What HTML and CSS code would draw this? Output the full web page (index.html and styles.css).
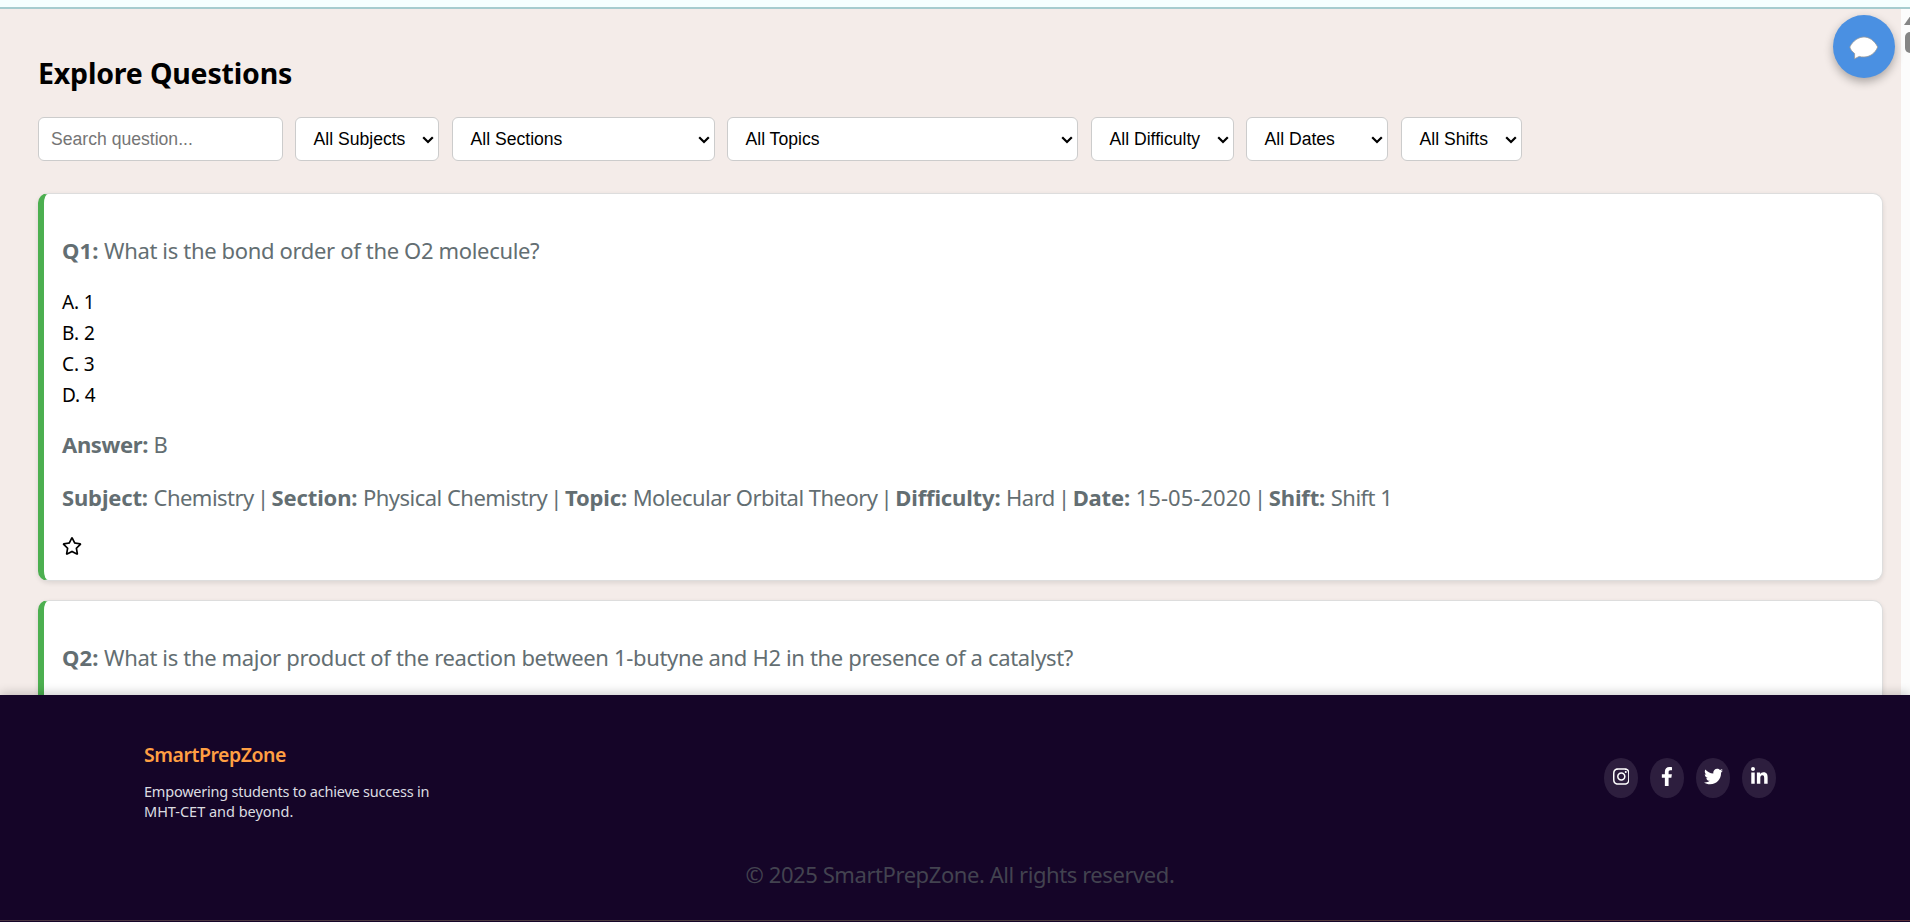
FILE: index.html
```html
<!DOCTYPE html>
<html lang="en">
<head>
<meta charset="utf-8">
<title>SmartPrepZone</title>
<link rel="stylesheet" href="styles.css">
</head>
<body>
<div class="app">
  <header class="topbar"></header>
  <div class="viewport">
    <main class="content">
      <h1 class="title"><span>Explore Questions</span></h1>
      <div class="filters">
        <input class="search" type="text" placeholder="Search question...">
        <div class="select subjects"><span>All Subjects</span><svg class="chev" viewBox="0 0 12 8"><path d="M1.2 1.2 6 6l4.800-4.800"/></svg></div>
        <div class="select sections"><span>All Sections</span><svg class="chev" viewBox="0 0 12 8"><path d="M1.2 1.2 6 6l4.800-4.800"/></svg></div>
        <div class="select topics"><span>All Topics</span><svg class="chev" viewBox="0 0 12 8"><path d="M1.2 1.2 6 6l4.800-4.800"/></svg></div>
        <div class="select difficulty"><span>All Difficulty</span><svg class="chev" viewBox="0 0 12 8"><path d="M1.2 1.2 6 6l4.800-4.800"/></svg></div>
        <div class="select dates"><span>All Dates</span><svg class="chev" viewBox="0 0 12 8"><path d="M1.2 1.2 6 6l4.800-4.800"/></svg></div>
        <div class="select shifts"><span>All Shifts</span><svg class="chev" viewBox="0 0 12 8"><path d="M1.2 1.2 6 6l4.800-4.800"/></svg></div>
      </div>
      <article class="card">
        <p class="line question"><strong>Q1:</strong> What is the bond order of the O2 molecule?</p>
        <ul class="options"><li>A. 1</li><li>B. 2</li><li>C. 3</li><li>D. 4</li></ul>
        <p class="line answer"><strong>Answer:</strong> B</p>
        <p class="line meta"><strong>Subject:</strong> Chemistry <i class="pipe">|</i> <strong>Section:</strong> Physical Chemistry <i class="pipe">|</i> <strong>Topic:</strong> Molecular Orbital Theory <i class="pipe">|</i> <strong>Difficulty:</strong> Hard <i class="pipe">|</i> <strong>Date:</strong> <span class="digits">15-05-2020</span> <i class="pipe">|</i> <strong>Shift:</strong> Shift 1</p>
        <svg class="star" viewBox="0 0 576 512"><path d="M528.1 171.500L382 150.200 316.700 17.800c-11.700-23.600-45.600-23.900-57.400 0L194 150.200 47.900 171.500c-26.200 3.800-36.700 36.100-17.700 54.600l105.700 103-25 145.500c-4.500 26.300 23.200 46 46.400 33.700L288 439.600l130.700 68.700c23.200 12.200 50.900-7.400 46.400-33.700l-25-145.500 105.700-103c19-18.500 8.500-50.800-17.700-54.600zM388.600 312.300l23.700 138.400L288 385.400l-124.300 65.300 23.700-138.400-100.600-98 139-20.200 62.200-126 62.200 126 139 20.200-100.600 98z"/></svg>
      </article>
      <article class="card">
        <p class="line question"><strong>Q2:</strong> What is the major product of the reaction between 1-butyne and H2 in the presence of a catalyst?</p>
      </article>
    </main>
    <div class="scrollbar"><div class="arrow"></div><div class="thumb"></div></div>
  </div>
  <footer class="footer">
    <div class="foot-row">
      <div>
        <h3 class="brand">SmartPrepZone</h3>
        <p class="tagline">Empowering students to achieve success in<br><span class="tail">MHT-CET and beyond.</span></p>
      </div>
      <div class="socials">
        <a class="social"><svg viewBox="0 0 448 512"><path d="M224.100 141c-63.600 0-114.900 51.300-114.900 114.900s51.300 114.900 114.900 114.900S339 319.500 339 255.900 287.700 141 224.100 141zm0 189.600c-41.100 0-74.700-33.500-74.700-74.700s33.500-74.700 74.700-74.700 74.700 33.500 74.700 74.700-33.600 74.700-74.700 74.700zm146.400-194.300c0 14.900-12 26.800-26.800 26.800-14.900 0-26.800-12-26.800-26.800s12-26.800 26.800-26.800 26.800 12 26.800 26.800zm76.100 27.200c-1.700-35.900-9.900-67.700-36.200-93.900-26.200-26.200-58-34.400-93.900-36.200-37-2.100-147.900-2.100-184.900 0-35.800 1.700-67.600 9.900-93.900 36.100s-34.400 58-36.200 93.900c-2.100 37-2.100 147.900 0 184.900 1.700 35.900 9.900 67.700 36.200 93.900s58 34.400 93.900 36.200c37 2.100 147.900 2.100 184.900 0 35.900-1.700 67.700-9.900 93.900-36.200 26.200-26.200 34.400-58 36.200-93.900 2.100-37 2.100-147.800 0-184.800zM398.800 388c-7.800 19.600-22.900 34.700-42.600 42.600-29.500 11.700-99.500 9-132.100 9s-102.700 2.600-132.100-9c-19.600-7.800-34.700-22.900-42.600-42.600-11.700-29.500-9-99.500-9-132.100s-2.600-102.700 9-132.100c7.800-19.600 22.900-34.700 42.600-42.600 29.500-11.700 99.500-9 132.100-9s102.700-2.600 132.100 9c19.600 7.800 34.700 22.900 42.600 42.600 11.700 29.500 9 99.500 9 132.100s2.700 102.700-9 132.100z"/></svg></a>
        <a class="social"><svg viewBox="0 0 320 512"><path d="M279.140 288l14.220-92.660h-88.910v-60.130c0-25.350 12.420-50.060 52.240-50.060h40.420V6.260S260.430 0 225.360 0c-73.220 0-121.080 44.380-121.080 124.720v70.620H22.890V288h81.390v224h100.170V288z"/></svg></a>
        <a class="social"><svg viewBox="0 0 512 512"><path d="M459.370 151.716c.325 4.548.325 9.097.325 13.645 0 138.720-105.583 298.558-298.558 298.558-59.452 0-114.680-17.219-161.137-47.106 8.447.974 16.568 1.299 25.340 1.299 49.055 0 94.213-16.568 130.274-44.832-46.132-.975-84.792-31.188-98.112-72.772 6.498.974 12.995 1.624 19.818 1.624 9.421 0 18.843-1.300 27.614-3.573-48.081-9.747-84.143-51.980-84.143-102.985v-1.299c13.969 7.797 30.214 12.670 47.431 13.319-28.264-18.843-46.781-51.005-46.781-87.391 0-19.492 5.197-37.360 14.294-52.954 51.655 63.675 129.300 105.258 216.365 109.807-1.624-7.797-2.599-15.918-2.599-24.040 0-57.828 46.782-104.934 104.934-104.934 30.213 0 57.502 12.670 76.670 33.137 23.715-4.548 46.456-13.320 66.599-25.340-7.798 24.366-24.366 44.833-46.132 57.827 21.117-2.273 41.584-8.122 60.426-16.243-14.292 20.791-32.161 39.308-52.628 54.253z"/></svg></a>
        <a class="social"><svg viewBox="0 0 448 512"><path d="M100.280 448H7.400V148.900h92.880zM53.790 108.100C24.090 108.100 0 83.500 0 53.800a53.790 53.790 0 0 1 107.580 0c0 29.700-24.100 54.300-53.790 54.300zM447.900 448h-92.680V302.400c0-34.700-.7-79.200-48.290-79.200-48.290 0-55.690 37.700-55.690 76.700V448h-92.780V148.900h89.080v40.800h1.300c12.400-23.500 42.690-48.300 87.880-48.300 94 0 111.280 61.900 111.280 142.300V448z"/></svg></a>
      </div>
    </div>
    <p class="copyright"><span>© 2025 SmartPrepZone. All rights reserved.</span></p>
    <div class="edge"></div>
  </footer>
  <button class="chat" aria-label="Chat"><svg viewBox="0 0 30 24"><path d="M15 1C20 1 25.500 4.500 28.700 11c-2.500 6.500-8.200 10-13.700 10-2 0-3.400-.2-4.800-.6L5.600 22.800V17.500C3 15.500 1.500 13.500 .8 11 4 4.500 9.800 1 15 1z"/></svg></button>
</div>
</body>
</html>
```
FILE: styles.css
```css
* { box-sizing: border-box; }
body {
  margin: 0;
  font-family: "Noto Sans", "Open Sans", sans-serif;
  background: #f4ece9;
}
h1, h3, p, ul { margin: 0; padding: 0; }
.app {
  position: relative;
  display: flex;
  flex-direction: column;
  height: 922px;
  overflow: hidden;
}
.topbar { flex: none; height: 9px; background: #f5ffff; border-bottom: 2px solid #a6cccf; }
.viewport { flex: 1; min-height: 0; display: flex; overflow: hidden; }
.content { flex: 1; min-width: 0; padding: 44px 18px 0 38px; }
.title { font-size: 28.5px; line-height: 40px; font-weight: 700; letter-spacing: -0.18px; color: #000; }
.filters {
  display: flex;
  margin-top: 24px;
  height: 44px;
  font-family: "Liberation Sans", Arial, sans-serif;
  font-size: 17.6px;
}
.search, .select {
  height: 44px;
  background: #fff;
  border: 1px solid #ccc;
  border-radius: 6px;
}
.search { width: 245px; padding: 0 12px; font: inherit; outline: 0; }
.search::placeholder { color: #757575; }
.select {
  display: flex;
  align-items: center;
  justify-content: space-between;
  padding: 0 4px 0 17.5px;
  color: #000;
  white-space: nowrap;
}
.chev { width: 12px; height: 8px; margin-top: 2px; fill: none; stroke: #000; stroke-width: 2.2; }
.subjects { width: 144px; margin-left: 12px; }
.sections { width: 263px; margin-left: 13px; }
.topics { width: 351px; margin-left: 12px; }
.difficulty { width: 143px; margin-left: 13px; }
.dates { width: 142px; margin-left: 12px; }
.shifts { width: 121px; margin-left: 13px; }
.card {
  margin-top: 32px;
  height: 388px;
  padding: 41px 18px 0;
  background: #fff;
  border: 1px solid #ddd;
  border-left: 6px solid #4caf50;
  border-radius: 10px;
  box-shadow: 0 2px 5px rgba(0, 0, 0, .1);
}
.card + .card { margin-top: 19px; }
.line { font-size: 22px; line-height: 30px; color: #636e72; white-space: nowrap; letter-spacing: -0.34px; }
.question strong { letter-spacing: 0.15px; }
.options { margin-top: 22px; list-style: none; font-size: 19px; line-height: 31px; color: #000; letter-spacing: -0.1px; }
.answer { margin-top: 18px; }
.meta { margin-top: 23px; letter-spacing: -0.52px; }
.meta strong { letter-spacing: -0.15px; margin-right: 0.4px; }
.digits { letter-spacing: 0.05px; }
.pipe { font-style: normal; margin: 0 -2.100px; }
.star { display: block; width: 20px; height: 18px; margin-top: 25px; }
.scrollbar { flex: none; width: 9px; background: #fcfcfc; overflow: hidden; }
.arrow { margin: 6px 0 0 3px; width: 14px; height: 10px; background: #858585; clip-path: polygon(50% 0, 100% 100%, 0 100%); }
.thumb { margin: 7px 0 0 4px; width: 12px; height: 21px; border-radius: 5px; background: #858585; }
.footer {
  position: relative;
  flex: none;
  display: flex;
  flex-direction: column;
  height: 227px;
  padding: 46px 134px 0 144px;
  background: #150528;
  box-shadow: 0 -2px 10px rgba(0, 0, 0, .2);
}
.foot-row { display: flex; justify-content: space-between; }
.brand { font-size: 19.500px; line-height: 28px; font-weight: 600; color: #ff9f43; letter-spacing: -0.46px; }
.tagline { margin-top: 12px; font-size: 14.500px; line-height: 20px; color: #dcdde1; letter-spacing: -0.22px; white-space: nowrap; }
.tail { letter-spacing: -0.02px; }
.socials { display: flex; gap: 12.500px; margin-top: 17px; }
.social {
  display: flex;
  justify-content: center;
  width: 33.600px;
  height: 40px;
  padding-top: 9px;
  border-radius: 50%;
  background: #2d1e3e;
}
.social svg { height: 19px; fill: #fff; }
.copyright { margin: 38px -7px 0 -7px; text-align: center; font-size: 22px; line-height: 30px; color: #434350; letter-spacing: -0.43px; }
.edge { margin: auto -134px 1px -144px; height: 1px; background: linear-gradient(90deg, #4a3442, #4a3d3d 50%, #5a2f38); }
.chat {
  position: absolute;
  left: 1833px;
  top: 15px;
  width: 62px;
  height: 63px;
  padding: 3px 0 0;
  display: flex;
  align-items: center;
  justify-content: center;
  border: 0;
  border-radius: 50%;
  background: #4a90e2;
  box-shadow: 0 4px 10px rgba(0, 0, 0, .3);
}
.chat svg { width: 30px; height: 24px; fill: #fff; stroke: #999; stroke-width: .8; }
```
